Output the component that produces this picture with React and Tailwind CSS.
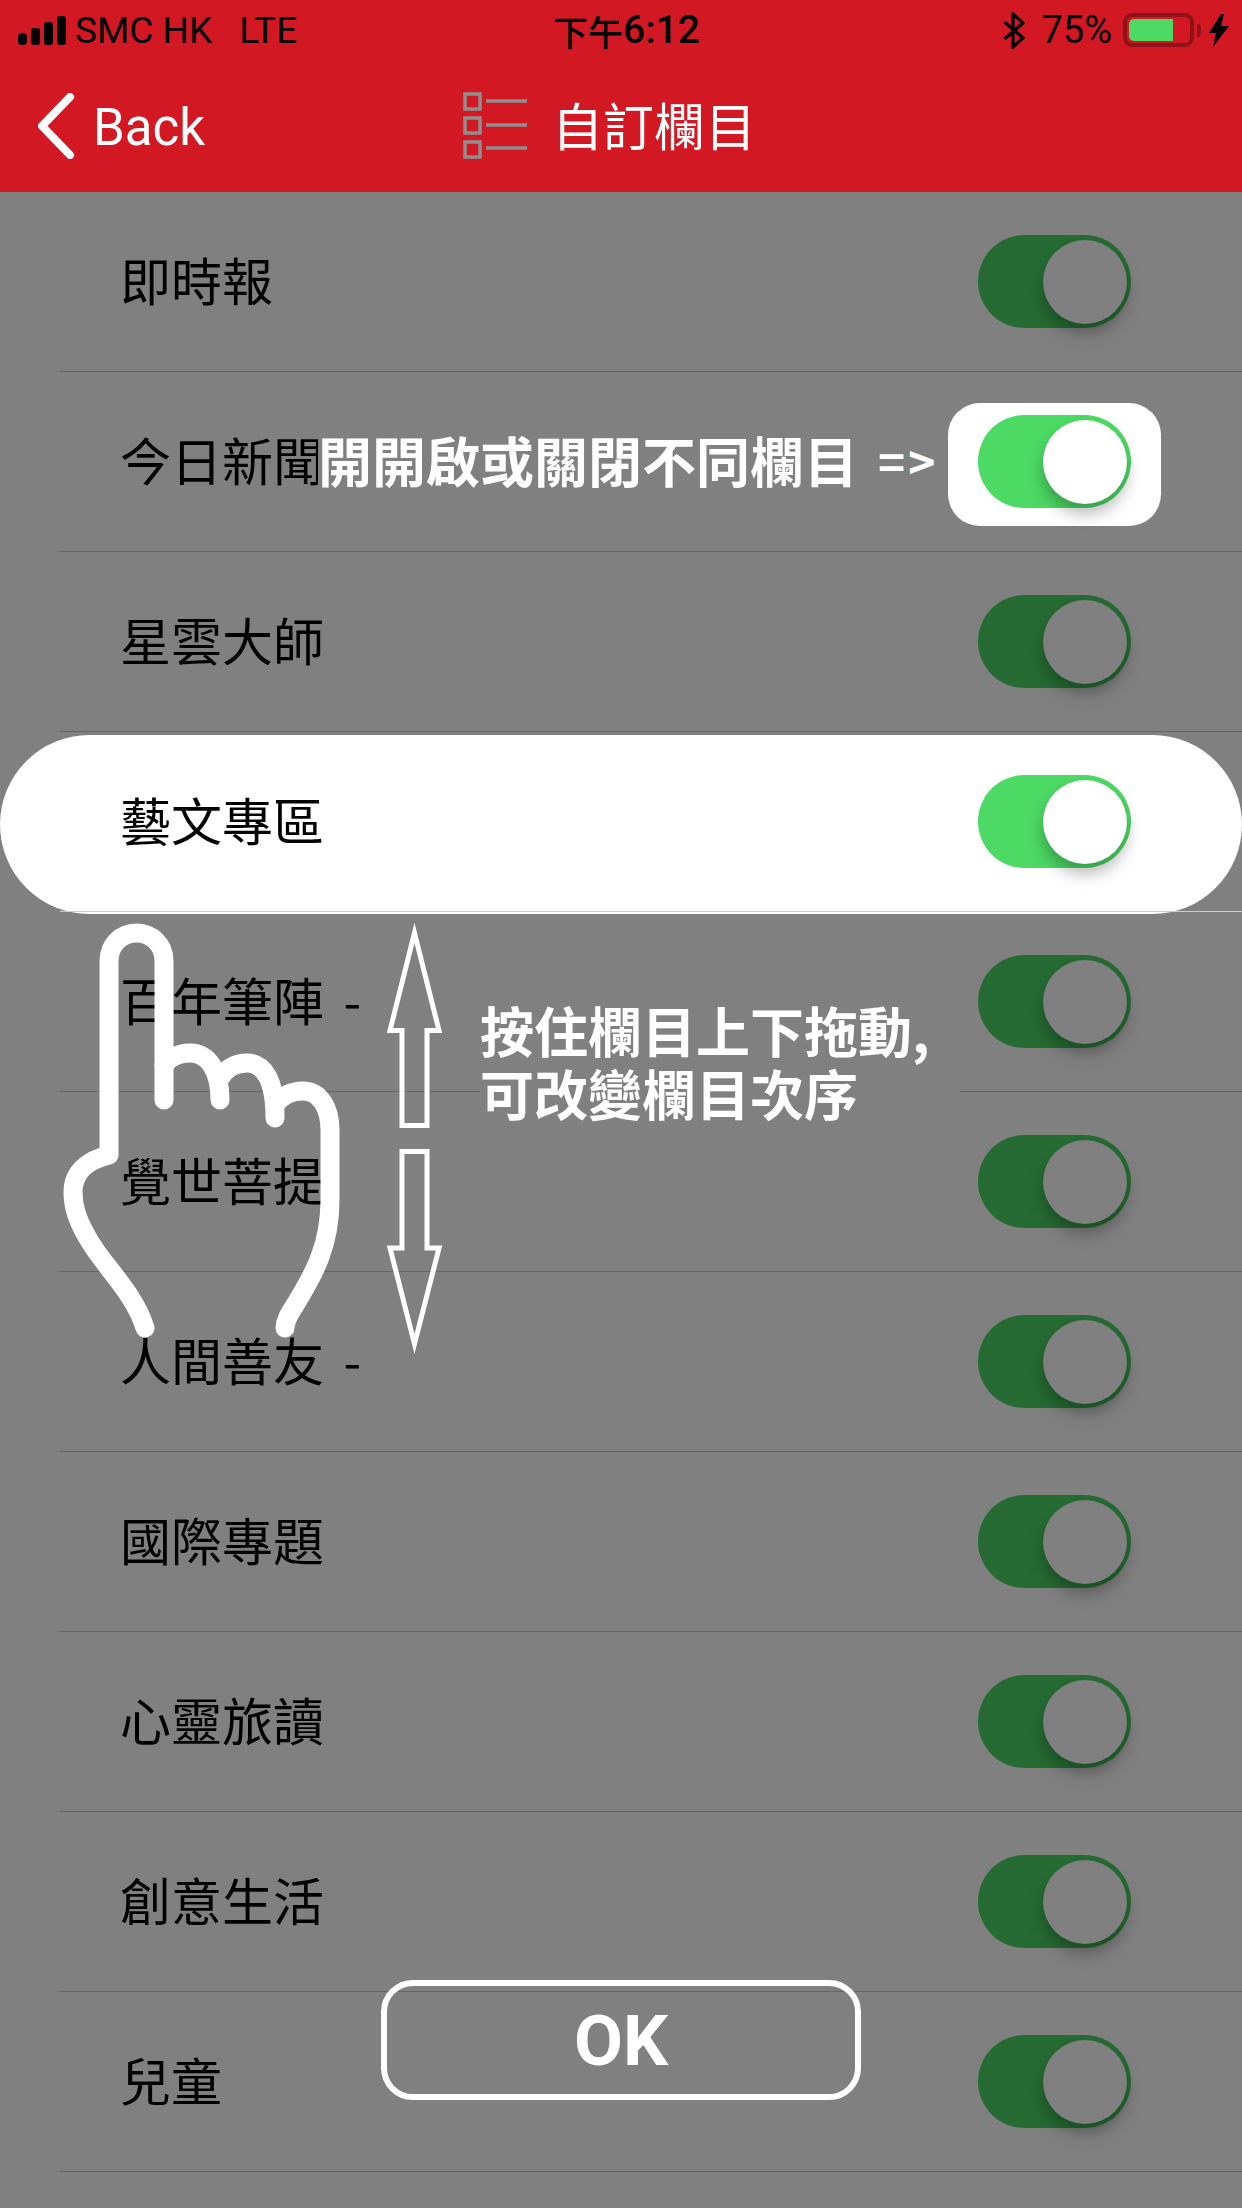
const CJK = "font-['Noto_Sans_CJK_TC','Noto_Sans',sans-serif]";
const LATIN = "font-['Roboto',sans-serif]";

const COLUMNS = [
  { name: "即時報" },
  { name: "今日新聞", boxed: true },
  { name: "星雲大師" },
  { name: "藝文專區", active: true },
  { name: "百年筆陣 -" },
  { name: "覺世菩提" },
  { name: "人間善友 -" },
  { name: "國際專題" },
  { name: "心靈旅讀" },
  { name: "創意生活" },
  { name: "兒童" },
];

export default function App() {
  return (
    <div className={`relative h-[2208px] w-[1242px] overflow-hidden bg-[#808080] ${CJK}`}>
      <header className="h-[192px] bg-[#d21923]">
        <StatusBar />
        <NavBar />
      </header>

      <div>
        {COLUMNS.map((c) => (
          <ColumnRow key={c.name} {...c} />
        ))}
      </div>

      {/* Help overlay on top of the list */}
      <div className="absolute left-[318px] top-[403px] flex h-[122px] w-[606px] items-center whitespace-nowrap bg-[#808080] pb-[8px] text-[54px] font-bold leading-none text-white">
        開開啟或關閉不同欄目
        <span className="ml-[20px] text-[46px] tracking-[3px]">=&gt;</span>
      </div>

      <div className="absolute left-[480px] top-[998px] w-[480px] bg-[#808080] text-[54px] font-bold leading-[63px] text-white">
        <p>按住欄目上下拖動,</p>
        <p>可改變欄目次序</p>
      </div>

      <DragHint />

      <button className={`absolute left-[381px] top-[1980px] flex h-[120px] w-[480px] items-center justify-center rounded-[32px] border-[6px] border-white pt-[3px] text-[71px] font-bold text-white ${LATIN}`}>
        OK
      </button>
    </div>
  );
}

function StatusBar() {
  return (
    <div className={`grid h-[60px] grid-cols-[553px_1fr_auto] items-center text-black ${LATIN}`}>
      <div className="flex items-center pl-[18px] text-[37px]">
        <svg width="48" height="29" viewBox="0 0 48 29" fill="black">
          <rect x="0" y="17" width="9" height="12" rx="4" />
          <rect x="13" y="12" width="9" height="17" rx="3" />
          <rect x="26" y="6" width="9" height="23" rx="3" />
          <rect x="39" y="0" width="9" height="29" rx="3" />
        </svg>
        <span className="ml-[9px] leading-none">SMC HK</span>
        <span className="ml-[27px] leading-none">LTE</span>
      </div>

      <div className="flex items-center whitespace-nowrap font-medium leading-none">
        <span className={`text-[35px] ${CJK}`}>下午</span>
        <span className="text-[39px]">6:12</span>
      </div>

      <div className="flex items-center pr-[13px]">
        <svg width="22" height="37" viewBox="0 0 22 37" fill="none" stroke="black" strokeWidth="3.2">
          <path d="M1.5 10 20 26 10 35V2l10 9L1.5 27" />
        </svg>
        <span className="ml-[16px] text-[38px] leading-none">75%</span>
        <div className="ml-[11px] h-[34px] w-[71px] rounded-[9px] border-[4px] border-[#8f1219] p-[2px]">
          <div className="h-full w-[44px] rounded-l-[5px] bg-[#4cd964]" />
        </div>
        <div className="ml-[3px] h-[13px] w-[4px] rounded-r-[4px] bg-[#8f1219]" />
        <svg className="ml-[8px]" width="20" height="33" viewBox="0 0 20 33" fill="black">
          <path d="M12 0 0 19h7L4 33 20 12h-8l3-12z" />
        </svg>
      </div>
    </div>
  );
}

function NavBar() {
  return (
    <div className="grid h-[132px] grid-cols-[463px_1fr] items-center text-white">
      <div className="flex items-center pl-[38px]">
        <svg width="37" height="66" viewBox="0 0 37 66" fill="none" stroke="white" strokeWidth="8" strokeLinecap="round" strokeLinejoin="round">
          <path d="M32 4 4 33l28 29" />
        </svg>
        <span className={`ml-[18px] pt-[2px] text-[51px] leading-none ${LATIN}`}>Back</span>
      </div>

      <div className="flex items-center">
        <svg width="65" height="68" viewBox="0 0 65 68" fill="none" stroke="#8e8e8e" strokeWidth="3.5">
          <rect x="2" y="2" width="15" height="15" />
          <rect x="2" y="26" width="15" height="15" />
          <rect x="2" y="50" width="15" height="15" />
          <path d="M23 9h41M23 33h41M23 56h41" />
        </svg>
        <span className="ml-[24px] pb-[3px] text-[51px] leading-none">自訂欄目</span>
      </div>
    </div>
  );
}

function ColumnRow({ name, active, boxed }) {
  return (
    <div className="relative">
      {active && <div className="absolute inset-x-0 top-[3px] h-[179px] rounded-[90px] bg-white" />}
      <div className={`relative ml-[60px] flex h-[180px] items-center justify-between border-b pl-[60px] pr-[111px] ${active ? "border-[#cccccc]" : "border-[#666666]"}`}>
        <span className="pb-[5px] text-[51px] leading-none text-black [word-spacing:8px]">{name}</span>
        {boxed && <div className="absolute left-[888px] top-[31px] h-[123px] w-[213px] rounded-[32px] bg-white" />}
        <Toggle lit={active || boxed} />
      </div>
    </div>
  );
}

function Toggle({ lit }) {
  return (
    <div className={`relative flex h-[93px] w-[153px] items-center justify-end rounded-full pr-[4px] ${lit ? "bg-[#4cd964]" : "bg-[#266b33]"}`}>
      <div className={`h-[84px] w-[84px] rounded-full shadow-[0_10px_16px_rgba(0,0,0,0.28)] ${lit ? "bg-white" : "bg-[#808080]"}`} />
    </div>
  );
}

// Pointing hand and the up/down arrows next to it
function DragHint() {
  return (
    <svg className="absolute left-0 top-[900px]" width="480" height="480" viewBox="0 900 480 480" fill="none" stroke="white">
      <g strokeWidth="19" strokeLinecap="round" strokeLinejoin="round">
        <path d="M145 1328C135 1295 108 1270 92 1245 76 1220 73 1205 73 1192 73 1172 88 1160 109 1155V961C109 945 121 933 136.5 933 152 933 164 945 164 961V1100" />
        <path d="M164 1065C170 1057 180 1053 190 1053 208 1053 220 1070 220 1100" />
        <path d="M220 1078C226 1068 236 1063 247 1063 264 1063 275 1080 275 1118" />
        <path d="M275 1105C281 1096 292 1091 303 1091 320 1091 330 1108 330 1130V1200C330 1250 310 1280 295 1305 290 1313 285 1320 285 1328" />
      </g>
      <g strokeWidth="5" strokeMiterlimit="12">
        <path d="M414.5 933 439 1030.5H427V1125.5H402V1030.5H390L414.5 933Z" />
        <path d="M414.5 1344 439 1248H427V1151.5H402V1248H390L414.5 1344Z" />
      </g>
    </svg>
  );
}
